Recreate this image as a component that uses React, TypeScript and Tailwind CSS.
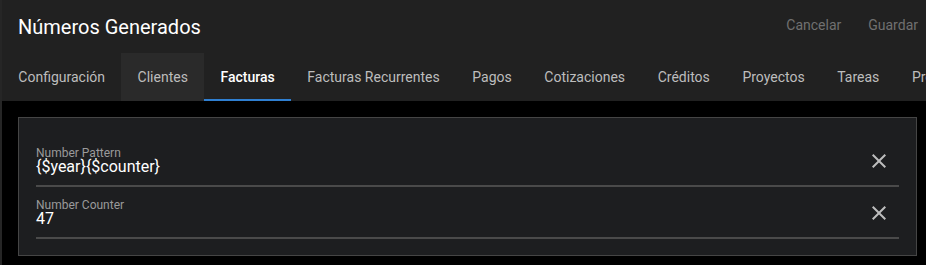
const tabs = [
  'Configuración',
  'Clientes',
  'Facturas',
  'Facturas Recurrentes',
  'Pagos',
  'Cotizaciones',
  'Créditos',
  'Proyectos',
  'Tareas',
  'Propuestas',
];

const fields = [
  { label: 'Number Pattern', value: '{$year}{$counter}' },
  { label: 'Number Counter', value: '47' },
];

function CloseIcon() {
  return (
    <svg width="24" height="24" viewBox="0 0 24 24" className="mr-[8px] shrink-0 fill-[#bdbdbd]">
      <path d="M19 6.41L17.59 5 12 10.59 6.41 5 5 6.41 10.59 12 5 17.59 6.41 19 12 13.41 17.59 19 19 17.59 13.41 12z" />
    </svg>
  );
}

export default function App() {
  return (
    <div
      className="w-[926px] h-[265px] overflow-hidden bg-black border-l-2 border-[#262626]"
      style={{ fontFamily: 'Roboto, "Liberation Sans", sans-serif' }}
    >
      {/* Header */}
      <div className="bg-[#212121]">
        <div className="h-[53px] flex items-center justify-between pl-4 pr-2">
          <h1 className="text-[20px] leading-none text-white pt-[1px]">Números Generados</h1>
          <div className="flex items-center gap-[27px] text-[14px] text-[#707070] pb-[2px]">
            <button>Cancelar</button>
            <button>Guardar</button>
          </div>
        </div>

        {/* Tabs */}
        <nav className="flex h-[48px] whitespace-nowrap">
          {tabs.map((tab) => {
            const active = tab === 'Facturas';
            const hover = tab === 'Clientes';
            return (
              <div
                key={tab}
                className={`shrink-0 px-[16.3px] flex items-center text-[14px] ${
                  active
                    ? 'text-white font-medium border-b-2 border-[#2f7fd1] pt-[2px]'
                    : 'text-[#bdbdbd]'
                } ${hover ? 'bg-[#2a2a2a]' : ''}`}
              >
                {tab}
              </div>
            );
          })}
        </nav>
      </div>

      {/* Body */}
      <div className="pt-4 pl-4 pr-[9px]">
        <div className="bg-[#1d1e20] border border-[#454545] px-[17px] pt-[29px] pb-[16px]">
          {fields.map((f, i) => (
            <div key={f.label} className={i > 0 ? 'pt-[12px]' : ''}>
              <div className="flex items-center">
                <div className="flex-1">
                  <div className="text-[12px] leading-[12px] text-[#9a9a9a]">{f.label}</div>
                  <div className="text-[16px] leading-[16px] text-white">{f.value}</div>
                </div>
                <CloseIcon />
              </div>
              <div className="mt-[10px] h-[2px] bg-[#4a4a4a]" />
            </div>
          ))}
        </div>
      </div>
    </div>
  );
}
